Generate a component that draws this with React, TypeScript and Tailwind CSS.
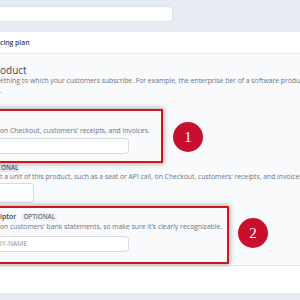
import React from "react";

export default function App() {
  return (
    <div
      className="relative w-[300px] h-[300px] overflow-hidden bg-[#e6ebf1]"
      style={{ fontFamily: '"Open Sans", "Noto Sans", sans-serif' }}
    >
      {/* top search band */}
      <div className="h-[32px] pt-[7px]">
        <div className="w-[172px] h-[14px] bg-white rounded-r-[3px] shadow-[0_0_0_1px_#dfe3e8]" />
      </div>

      {/* header strip */}
      <div className="h-[22px] bg-white border-b border-[#e3e8ee] flex items-center">
        <span className="text-[6.8px] leading-[10px] font-semibold text-[#3c4257]">cing plan</span>
      </div>

      {/* content */}
      <div className="h-[211px] bg-[#f9fafb] flex flex-col text-[#697386]">
        <div className="mt-[10px] text-[10px] leading-[12px] text-[#3c4257] whitespace-nowrap">oduct</div>
        <div className="text-[6.8px] leading-[10px] whitespace-nowrap">
          ething to which your customers subscribe. For example, the enterprise tier of a software product
        </div>
        <div className="text-[6.8px] leading-[10px]">.</div>

        {/* field 1 */}
        <div className="mt-[30px] text-[6.8px] leading-[10px] whitespace-nowrap">
          on Checkout, customers' receipts, and invoices.
        </div>
        <div className="mt-[3px] w-[128px] h-[14px] bg-white rounded-r-[3px] shadow-[0_0_0_1px_#d7dce3]" />

        {/* field 2 */}
        <div className="mt-[11px] flex">
          <span className="bg-[#e3e8ee] text-[6.3px] leading-[8px] font-semibold text-[#4f566b] px-[1px]">ONAL</span>
        </div>
        <div className="text-[6.8px] leading-[10px] whitespace-nowrap">
          t a unit of this product, such as a seat or API call, on Checkout, customers' receipts, and invoices.
        </div>
        <div className="mt-[2px] flex">
          <div className="w-[33px] h-[18px] bg-white rounded-r-[3px] shadow-[0_0_0_1px_#d7dce3]" />
        </div>

        {/* field 3 */}
        <div className="mt-[10px] flex items-center gap-[5px] leading-[10px]">
          <span className="text-[7px] font-semibold text-[#3c4257]">iptor</span>
          <span className="bg-[#eef1f5] text-[6.3px] leading-[8px] font-semibold text-[#697386] px-[2px]">OPTIONAL</span>
        </div>
        <div className="text-[6.8px] leading-[10px] whitespace-nowrap">
          on customers' bank statements, so make sure it's clearly recognizable.
        </div>
        <div className="mt-[5px] w-[128px] h-[14px] bg-white rounded-r-[3px] shadow-[0_0_0_1px_#d7dce3] flex items-center">
          <span className="text-[6.8px] text-[#8792a2]">IY-NAME</span>
        </div>
      </div>

      {/* footer */}
      <div className="h-[28px] bg-white border-t border-[#e3e8ee]" />

      {/* annotation boxes */}
      <div className="absolute left-[-4px] top-[109px] w-[167px] h-[54px] border-2 border-[#d3141c] shadow-[0_0_5px_1px_rgba(0,0,0,0.3)]" />
      <div className="absolute left-[-4px] top-[206px] w-[233px] h-[58px] border-2 border-[#d3141c] shadow-[0_0_5px_1px_rgba(0,0,0,0.3)]" />

      {/* numbered circles */}
      <div className="absolute left-[173px] top-[122px] w-[30px] h-[30px] rounded-full bg-[#c8102e] flex items-center justify-center text-white text-[15px]" style={{ fontFamily: '"Liberation Serif", serif' }}>
        1
      </div>
      <div className="absolute left-[238px] top-[218px] w-[30px] h-[30px] rounded-full bg-[#c8102e] flex items-center justify-center text-white text-[15px]" style={{ fontFamily: '"Liberation Serif", serif' }}>
        2
      </div>
    </div>
  );
}
